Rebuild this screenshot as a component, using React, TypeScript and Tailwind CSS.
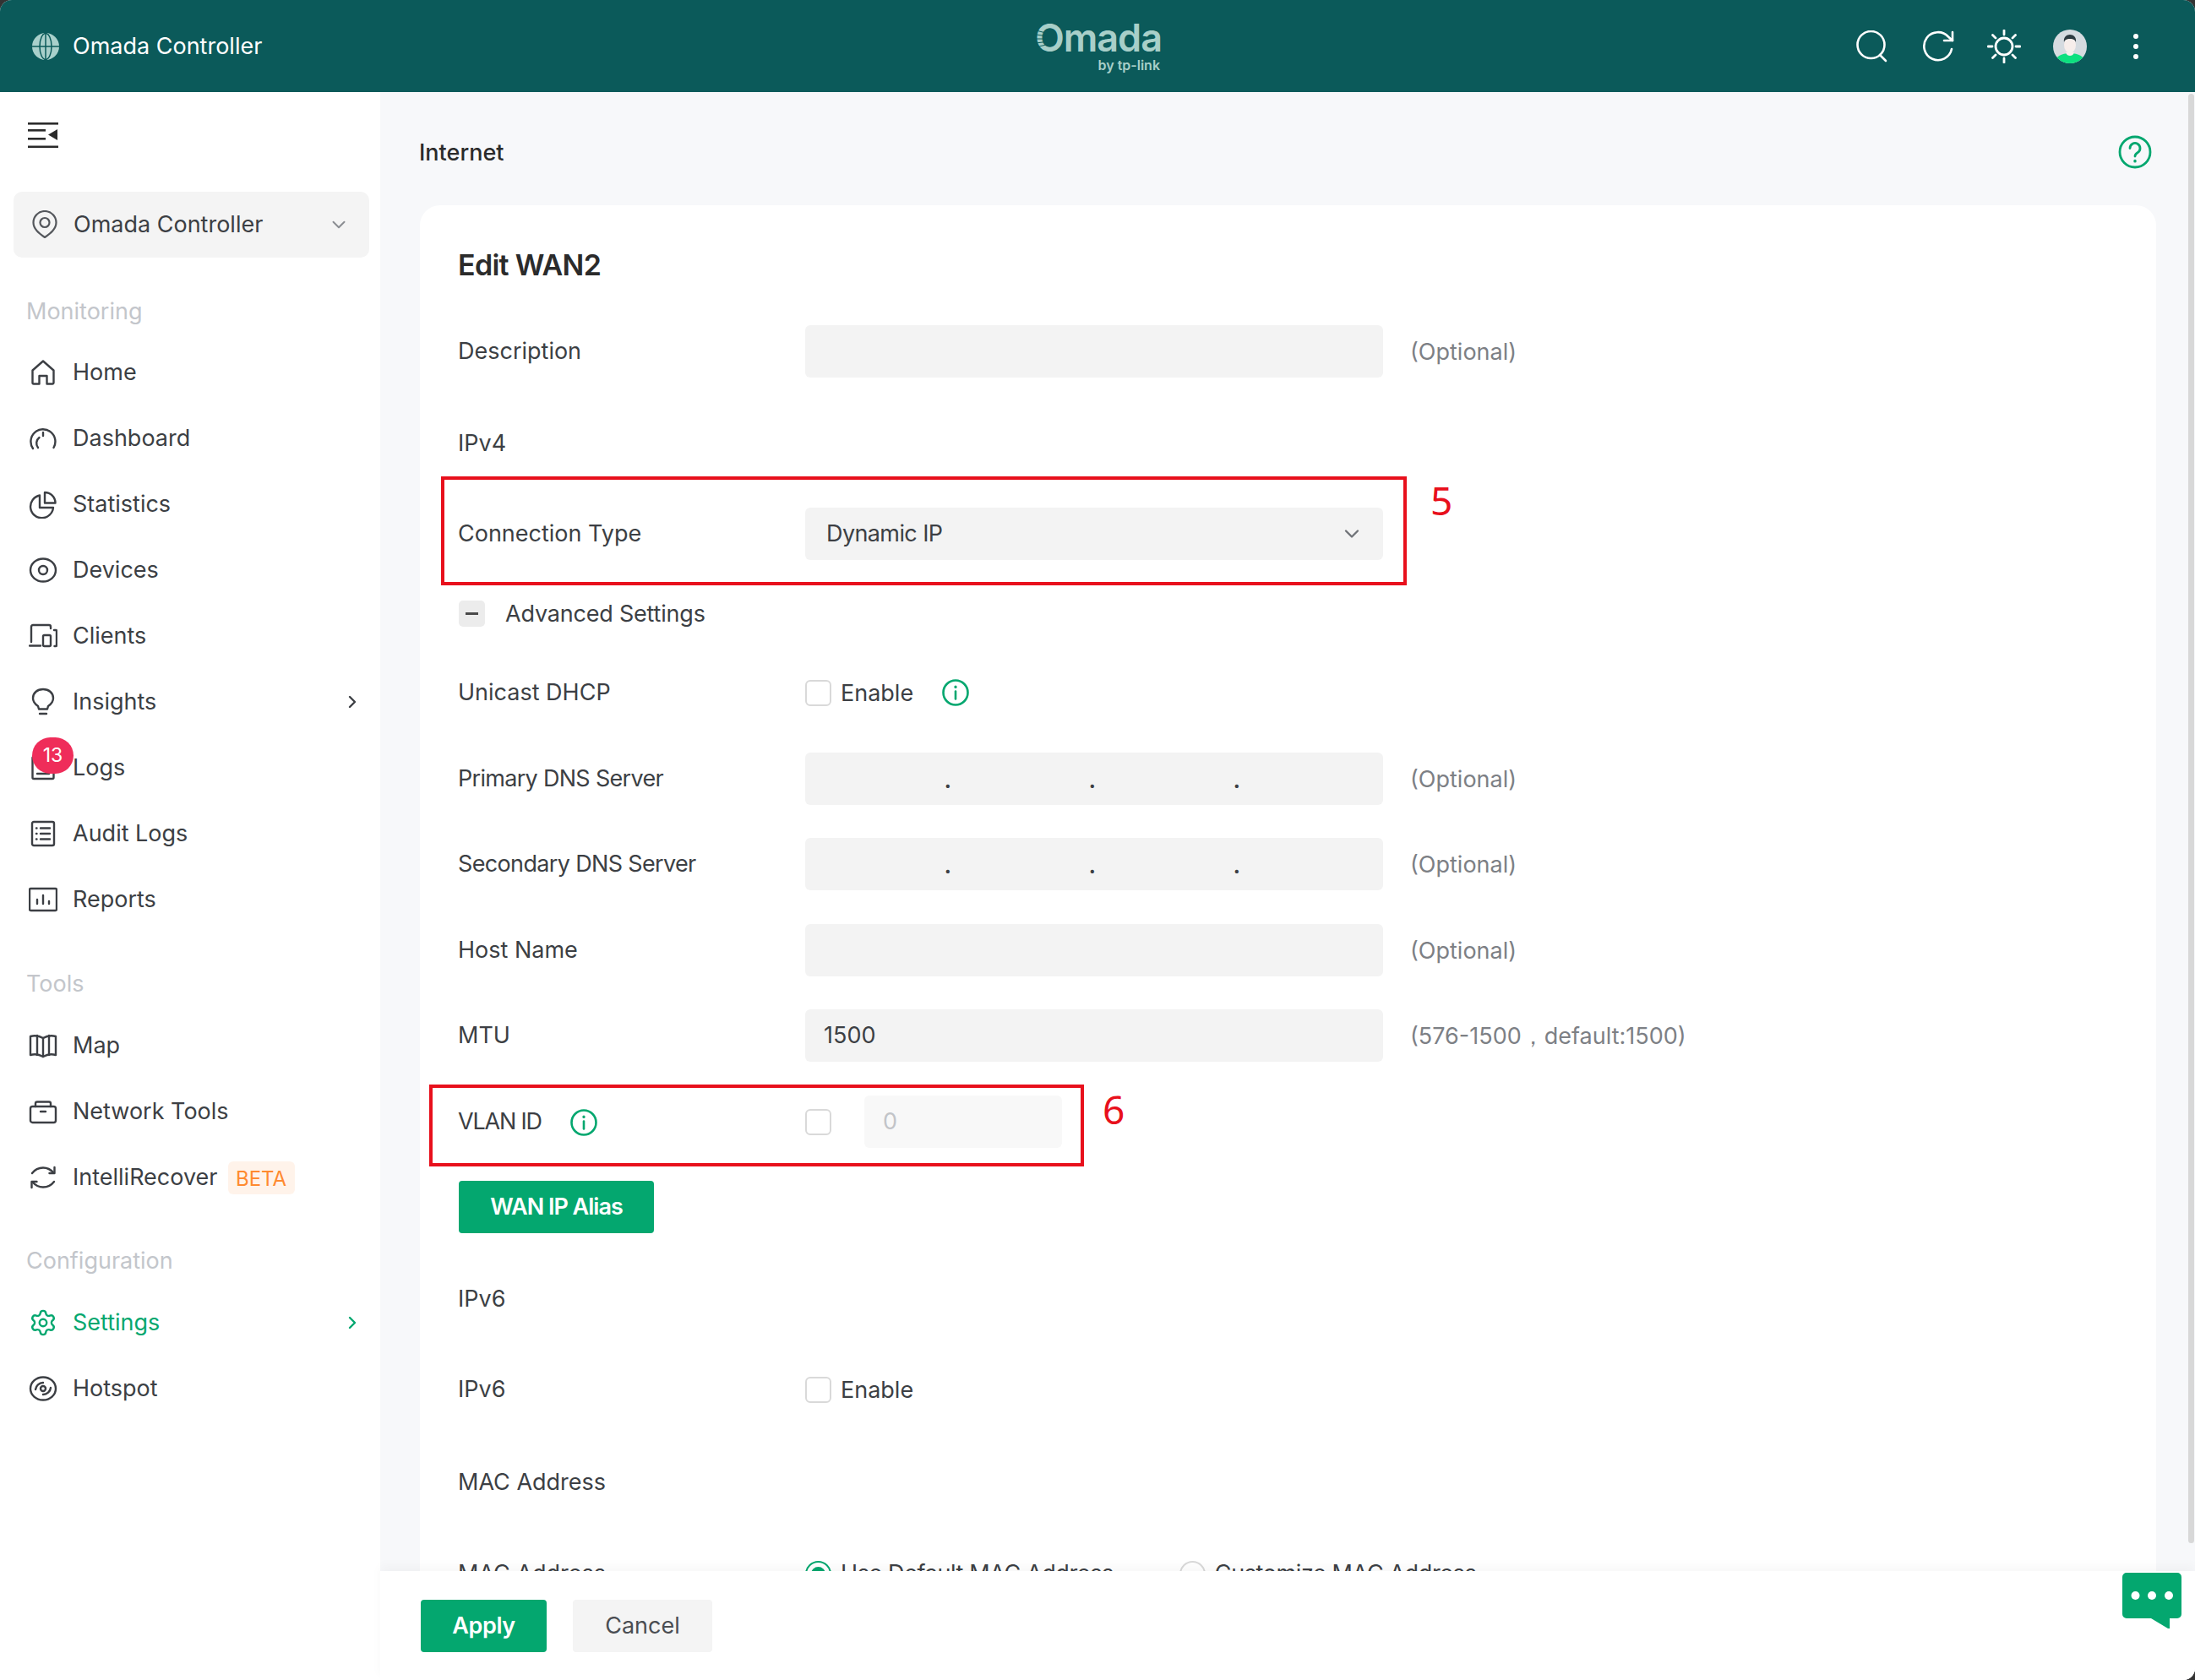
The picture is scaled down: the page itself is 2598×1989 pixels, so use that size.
import React from 'react';
import { Settings, ChevronDown, ChevronRight } from 'lucide-react';

type IconProps = { className?: string };

const Ico: React.FC<React.PropsWithChildren<IconProps>> = ({ children, className }) => (
  <svg viewBox="0 0 34 34" fill="none" stroke="currentColor" strokeWidth="2.4" strokeLinecap="round" strokeLinejoin="round" className={className ?? 'w-[34px] h-[34px] shrink-0'}>
    {children}
  </svg>
);

const icons: Record<string, React.ReactNode> = {
  Home: <path d="M4.5 14.5 17 3.5l12.5 11V29a1.5 1.5 0 0 1-1.5 1.5h-6.500V21h-9v9.500H6A1.500 1.500 0 0 1 4.500 29Z" />,
  Dashboard: (
    <>
      <path d="M5 29A14.500 14.500 0 1 1 29.500 28" />
      <path d="M11 28a8.500 8.500 0 0 1 1.500-12" />
      <path d="M17 10v4" />
    </>
  ),
  Statistics: (
    <>
      <path d="M13 6.500A13.500 13.500 0 1 0 29 21H13Z" />
      <path d="M19 3a12.500 12.500 0 0 1 12.500 12.500H19Z" />
    </>
  ),
  Devices: (
    <>
      <ellipse cx="17" cy="17" rx="15" ry="13.500" />
      <circle cx="17" cy="17" r="5" />
    </>
  ),
  Clients: (
    <>
      <path d="M3 24V6A2 2 0 0 1 5 4h19a2 2 0 0 1 2 2v2" />
      <path d="M1 28.500h13" />
      <rect x="17" y="16" width="9" height="13" rx="1.500" />
      <path d="M30 10h2a1 1 0 0 1 1 1v17a1 1 0 0 1-1 1h-1.500" />
    </>
  ),
  Insights: (
    <>
      <path d="M17 2c-7 0-12 4.500-12 10.500 0 4.500 3 7.500 6 9.500l1 3.500h10l1-3.500c3-2 6-5 6-9.500C29 6.500 24 2 17 2Z" />
      <path d="M13 31h8" />
    </>
  ),
  Logs: (
    <>
      <rect x="4.500" y="4" width="25" height="26" rx="1.500" />
      <path d="M10 24h14" />
    </>
  ),
  'Audit Logs': (
    <>
      <rect x="4" y="3" width="26" height="28" rx="2" />
      <path d="M14 10.500h11M14 17h11M14 23.500h11M9 10.500h.5M9 17h.5M9 23.500h.5" />
    </>
  ),
  Reports: (
    <>
      <rect x="1" y="4" width="32" height="26" rx="1.500" />
      <path d="M10 22v-5M17 22V12M24 22v-3" />
    </>
  ),
  Map: (
    <>
      <path d="M2 6c5-1.500 10-1 15 2 5-3 10-3.500 15-2v22c-5-1.500-10-1-15 2-5-3-10-3.500-15-2Z" />
      <path d="M10 5v23M17 8v22M24 5v23" />
    </>
  ),
  'Network Tools': (
    <>
      <rect x="2" y="11" width="30" height="19" rx="2.500" />
      <path d="M8 11V7.500A2 2 0 0 1 10 5.500h14a2 2 0 0 1 2 2V11" />
      <path d="M14 17h6" />
    </>
  ),
  IntelliRecover: (
    <>
      <path d="M4 12c3-4 8-6.500 13-6.500s9 2 12.500 6" />
      <path d="M30.500 5v7h-6" />
      <path d="M30 22c-3 4-8 6.500-13 6.500s-9-2-12.500-6" />
      <path d="M3.500 29v-7h6" />
    </>
  ),
  Hotspot: (
    <>
      <ellipse cx="17" cy="17" rx="15" ry="13.500" />
      <path d="M8 18a9 9 0 0 1 9-8M26 16a9 9 0 0 1-9 8" />
      <circle cx="17" cy="17" r="3" />
    </>
  ),
};

const NavItem: React.FC<{ label: string; arrow?: boolean; active?: boolean; children?: React.ReactNode }> = ({ label, arrow, active, children }) => (
  <div className={`relative flex h-[78px] items-center gap-[18px] pl-[34px] pr-[21px] text-[27px] ${active ? 'text-[#04a76f]' : 'text-[#3c3f44]'}`}>
    {label === 'Settings' ? <Settings className="h-[34px] w-[34px] shrink-0" strokeWidth={1.7} /> : <Ico>{icons[label]}</Ico>}
    <span className="pt-[1px]">{label}</span>
    {children}
    {arrow && <ChevronRight className="ml-auto h-[24px] w-[24px]" strokeWidth={2.4} />}
  </div>
);

const SectionLabel: React.FC<{ label: string; className: string }> = ({ label, className }) => (
  <div className={`pl-[31px] text-[27px] leading-[40px] text-[#c3c6cb] ${className}`}>{label}</div>
);

const Field: React.FC<{ className?: string; children?: React.ReactNode }> = ({ className, children }) => (
  <div className={`h-[62px] w-[684px] rounded-[6px] bg-[#f3f3f3] ${className ?? ''}`}>{children}</div>
);

const Row: React.FC<{ label: React.ReactNode; className: string; children?: React.ReactNode; h?: string }> = ({ label, className, children, h }) => (
  <div className={`flex items-center ${h ?? 'h-[62px]'} ${className}`}>
    <div className="flex w-[411px] shrink-0 items-center gap-[33px] pt-[1px] text-[#3c3f44]">{label}</div>
    {children}
  </div>
);

const Optional: React.FC<{ text?: string }> = ({ text }) => (
  <span className="ml-[32px] pt-[2px] text-[#7d8085]">{text ?? '(Optional)'}</span>
);

const IpField = () => (
  <Field className="grid grid-cols-4 text-[#3c3f44]">
    {[0, 1, 2].map(i => (
      <div key={i} className="mr-[-2px] flex items-end justify-end pb-[14px] font-semibold leading-[30px]">.</div>
    ))}
  </Field>
);

const Check = () => <div className="h-[31px] w-[31px] shrink-0 rounded-[6px] border-2 border-[#d9d9d9] bg-white" />;

const InfoIcon = () => (
  <svg viewBox="0 0 34 34" fill="none" className="h-[34px] w-[34px] shrink-0 text-[#04a76f]" stroke="currentColor" strokeWidth="2.6" strokeLinecap="round">
    <circle cx="17" cy="17" r="14.500" />
    <path d="M17 15.500v9" />
    <path d="M17 10v.4" strokeWidth="3.200" />
  </svg>
);

const Radio: React.FC<{ on?: boolean }> = ({ on }) => (
  <div className={`flex h-[31px] w-[31px] shrink-0 items-center justify-center rounded-full border-2 ${on ? 'border-[#04a76f]' : 'border-[#d9d9d9]'}`}>
    {on && <div className="h-[17px] w-[17px] rounded-full bg-[#04a76f]" />}
  </div>
);

export default function App() {
  return (
    <div className="h-[1989px] w-[2598px] overflow-hidden bg-[#333333] font-['Inter','Noto_Sans',sans-serif] text-[27px]">
      <div className="relative flex h-full flex-col overflow-hidden rounded-t-[14px] rounded-br-[14px] bg-white">
        <header className="relative flex h-[109px] shrink-0 items-center bg-[#0b5a5a] text-white">
          <svg viewBox="0 0 32 32" className="ml-[38px] h-[32px] w-[32px] text-[#a9d0cb]" fill="currentColor">
            <circle cx="16" cy="16" r="16" />
            <path d="M0 16h32M16 0v32" stroke="#0b5a5a" strokeWidth="1.500" />
            <ellipse cx="16" cy="16" rx="7" ry="15.500" fill="none" stroke="#0b5a5a" strokeWidth="1.500" />
          </svg>
          <span className="ml-[16px] pt-[2px] text-[27px]">Omada Controller</span>
          <div className="absolute left-[1225px] top-[22px] flex w-[150px] flex-col items-end text-[#a8cfc9]">
            <span className="relative text-[45px] font-semibold leading-[46px] tracking-[-1px]">
              Omada
              <svg viewBox="0 0 12 26" className="absolute left-[1px] top-[11px] h-[26px] w-[12px]" stroke="#0b5a5a" strokeWidth="1">
                <path d="M0 3l12 3M0 8l12 1.500M0 13h12M0 18l12-1.500M0 23l12-3" />
              </svg>
            </span>
            <span className="mr-[2px] text-[16px] font-semibold leading-[18px]">by tp-link</span>
          </div>
          <div className="ml-auto flex items-center pr-[31px]">
            <div className="flex w-[78px] justify-center">
              <svg viewBox="0 0 38 38" fill="none" stroke="white" strokeWidth="2.600" strokeLinecap="round" className="h-[38px] w-[38px]">
                <circle cx="17.500" cy="17" r="16" />
                <path d="m28 29 7 7" />
              </svg>
            </div>
            <div className="flex w-[78px] justify-center">
              <svg viewBox="0 0 38 38" fill="none" stroke="white" strokeWidth="2.600" strokeLinecap="round" strokeLinejoin="round" className="h-[38px] w-[38px]">
                <path d="M35 22A16.500 16.500 0 1 1 31 7.500L36 12" />
                <path d="M36 2v10H26" />
              </svg>
            </div>
            <div className="flex w-[78px] justify-center">
              <svg viewBox="0 0 40 40" fill="none" stroke="white" strokeWidth="2.800" strokeLinecap="round" className="h-[40px] w-[40px]">
                <circle cx="20" cy="20" r="10" />
                <path d="M20 1v5M20 34v5M1 20h5M34 20h5M6.500 6.500l3.500 3.500M30 30l3.500 3.500M6.500 33.500 10 30M30 10l3.500-3.500" />
              </svg>
            </div>
            <div className="flex w-[78px] justify-center">
              <svg viewBox="0 0 40 40" className="h-[40px] w-[40px]">
                <clipPath id="av"><circle cx="20" cy="20" r="20" /></clipPath>
                <g clipPath="url(#av)">
                  <rect width="40" height="40" fill="#d5dbe0" />
                  <path d="M2 40c0-8 8-12 18-12s18 4 18 12Z" fill="#0ce07f" />
                  <ellipse cx="20" cy="18" rx="7" ry="10" fill="#f7eeeb" />
                  <path d="M20 27h-5c1 3 3 4 5 4s4-1 5-4Z" fill="#f7eeeb" />
                  <path d="M13 15c-1-6 3-9 7-9s8 3 7 9c-1-3-3-4-7-4s-6 1-7 4Z" fill="#2c3a40" />
                </g>
              </svg>
            </div>
            <div className="flex w-[78px] flex-col items-center gap-[6px]">
              <div className="h-[6px] w-[6px] rounded-full bg-white" />
              <div className="h-[6px] w-[6px] rounded-full bg-white" />
              <div className="h-[6px] w-[6px] rounded-full bg-white" />
            </div>
          </div>
        </header>

        <div className="flex min-h-0 flex-1">
          <aside className="w-[450px] shrink-0 bg-white">
            <div className="flex h-[102px] items-center pl-[33px]">
              <svg viewBox="0 0 36 32" className="h-[32px] w-[36px]" fill="#2b2b2b">
                <rect y="1" width="36" height="2.600" />
                <rect y="9" width="21" height="2.600" />
                <rect y="19" width="21" height="2.600" />
                <rect y="28.500" width="36" height="2.600" />
                <path d="M35 9v13l-11-6.500Z" />
              </svg>
            </div>
            <div className="ml-[16px] mr-[13px] mt-[16px] flex h-[78px] items-center gap-[19px] rounded-[10px] bg-[#f4f4f4] pl-[22px] pr-[23px] text-[#3c3f44]">
              <svg viewBox="0 0 30 34" fill="none" stroke="currentColor" strokeWidth="2.200" strokeLinejoin="round" className="h-[34px] w-[30px] text-[#54575c]">
                <path d="M15 32C8 27 1.500 22 1.500 14.500a13.500 13.500 0 0 1 27 0C28.500 22 22 27 15 32Z" />
                <circle cx="15" cy="14.500" r="5.500" />
              </svg>
              <span>Omada Controller</span>
              <ChevronDown className="ml-auto h-[26px] w-[26px] text-[#8a8d92]" strokeWidth={1.800} />
            </div>
            <SectionLabel label="Monitoring" className="mt-[44px]" />
            <div className="mt-[13px]">
              <NavItem label="Home" />
              <NavItem label="Dashboard" />
              <NavItem label="Statistics" />
              <NavItem label="Devices" />
              <NavItem label="Clients" />
              <NavItem label="Insights" arrow />
              <NavItem label="Logs">
                <div className="absolute left-[38px] top-[3px] flex h-[43px] w-[49px] items-center justify-center rounded-full bg-[#ef2d5a] text-[23px] text-white">13</div>
              </NavItem>
              <NavItem label="Audit Logs" />
              <NavItem label="Reports" />
            </div>
            <SectionLabel label="Tools" className="mt-[41px]" />
            <div className="mt-[14px]">
              <NavItem label="Map" />
              <NavItem label="Network Tools" />
              <NavItem label="IntelliRecover">
                <span className="ml-[-6px] flex h-[39px] w-[79px] items-center justify-center rounded-[6px] bg-[#fff3ea] pt-[3px] text-[24px] text-[#ff8a30]">BETA</span>
              </NavItem>
            </div>
            <SectionLabel label="Configuration" className="mt-[40px]" />
            <div className="mt-[14px]">
              <NavItem label="Settings" arrow active />
              <NavItem label="Hotspot" />
            </div>
          </aside>

          <main className="relative flex min-w-0 flex-1 flex-col bg-[#f7f8fa]">
            <div className="relative min-h-0 flex-1 overflow-hidden pl-[47px] pr-[46px]">
              <div className="flex h-[134px] items-center justify-between pt-[8px]">
                <span className="ml-[-1px] pt-[2px] font-medium text-[#2b2b2b]">Internet</span>
                <svg viewBox="0 0 40 40" fill="none" stroke="#04a76f" strokeWidth="2.800" strokeLinecap="round" className="mr-[5px] h-[40px] w-[40px]">
                  <circle cx="20" cy="20" r="18" />
                  <path d="M14 15.500a6 6 0 1 1 9 5.200c-2 1.200-3 2.300-3 4.300" />
                  <path d="M20 30.500v.4" strokeWidth="3.400" />
                </svg>
              </div>
              <div className="relative min-h-[1700px] rounded-t-[24px] bg-white pl-[45px] pt-[36px]">
                <h2 className="flex h-[70px] items-center pb-[2px] text-[34px] font-semibold tracking-[-0.7px] text-[#2b2b2b]">Edit WAN2</h2>

                <Row label="Description" className="mt-[36px]">
                  <Field />
                  <Optional />
                </Row>
                <Row label="IPv4" h="h-[40px]" className="mt-[58px]" />
                <Row label="Connection Type" className="mt-[56px]">
                  <Field className="flex items-center justify-between pl-[25px] pr-[23px] text-[#3c3f44]">
                    <span className="tracking-[-0.6px]">Dynamic IP</span>
                    <ChevronDown className="h-[28px] w-[28px] text-[#6f7277]" strokeWidth={2} />
                  </Field>
                </Row>
                <div className="ml-[1px] mt-[48px] flex h-[31px] items-center gap-[24px] text-[#3c3f44]">
                  <div className="flex h-[31px] w-[31px] items-center justify-center rounded-[5px] bg-[#ececec]">
                    <div className="h-[3px] w-[15px] bg-[#4a4a4a]" />
                  </div>
                  <span className="pt-[2px] tracking-[-0.2px]">Advanced Settings</span>
                </div>
                <Row label="Unicast DHCP" className="mt-[47px]">
                  <Check />
                  <span className="ml-[11px] pt-[2px] text-[#3c3f44]">Enable</span>
                  <span className="ml-[33px]"><InfoIcon /></span>
                </Row>
                <Row label={<span className="tracking-[-0.7px]">Primary DNS Server</span>} className="mt-[40px]">
                  <IpField />
                  <Optional />
                </Row>
                <Row label={<span className="tracking-[-0.65px]">Secondary DNS Server</span>} className="mt-[39px]">
                  <IpField />
                  <Optional />
                </Row>
                <Row label="Host Name" className="mt-[40px]">
                  <Field />
                  <Optional />
                </Row>
                <Row label="MTU" className="mt-[39px]">
                  <Field className="flex items-center pl-[22px] text-[#3c3f44]">1500</Field>
                  <Optional text="(576-1500，default:1500)" />
                </Row>
                <Row label={<><span className="tracking-[-1.2px]">VLAN ID</span><InfoIcon /></>} className="mt-[40px]">
                  <Check />
                  <div className="ml-[39px] flex h-[62px] w-[234px] items-center rounded-[6px] bg-[#f8f8f8] pl-[22px] text-[#c2c4c8]">0</div>
                </Row>
                <button className="ml-[1px] mt-[39px] flex h-[62px] w-[231px] items-center justify-center rounded-[4px] bg-[#04a76f] pt-[1px] font-semibold tracking-[-1px] text-white">WAN IP Alias</button>
                <Row label="IPv6" h="h-[40px]" className="mt-[58px]" />
                <Row label="IPv6" h="h-[40px]" className="mt-[67px]">
                  <Check />
                  <span className="ml-[11px] pt-[2px] text-[#3c3f44]">Enable</span>
                </Row>
                <Row label="MAC Address" h="h-[40px]" className="mt-[70px]" />
                <Row label="MAC Address" h="h-[40px]" className="mt-[68px]">
                  <Radio on />
                  <span className="ml-[11px] tracking-[-0.4px] text-[#3c3f44]">Use Default MAC Address</span>
                  <span className="ml-[78px]"><Radio /></span>
                  <span className="ml-[11px] tracking-[-0.4px] text-[#3c3f44]">Customize MAC Address</span>
                </Row>

                <div className="absolute left-[25px] top-[321px] h-[129px] w-[1143px] border-[4px] border-[#e8101c]" />
                <span className="absolute left-[1196px] top-[319px] font-['Noto_Sans',sans-serif] text-[46px] leading-[60px] text-[#e8101c]">5</span>
                <div className="absolute left-[11px] top-[1041px] h-[97px] w-[775px] border-[4px] border-[#e8101c]" />
                <span className="absolute left-[808px] top-[1040px] font-['Noto_Sans',sans-serif] text-[46px] leading-[60px] text-[#e8101c]">6</span>
              </div>
            </div>

            <footer className="z-10 flex h-[129px] shrink-0 items-center gap-[31px] bg-white pl-[48px] shadow-[0_-6px_12px_rgba(0,0,0,0.03)]">
              <button className="h-[62px] w-[149px] rounded-[4px] bg-[#04a76f] pt-[2px] font-semibold tracking-[-0.4px] text-white">Apply</button>
              <button className="h-[62px] w-[165px] rounded-[4px] bg-[#f4f4f4] pt-[2px] text-[#4a4d52]">Cancel</button>
            </footer>

            <div className="absolute right-[1px] top-[2px] h-[1716px] w-[7px] rounded-full bg-[#d8d8d8]" />
            <svg viewBox="0 0 70 66" className="absolute bottom-[61px] right-[16px] z-20 h-[66px] w-[70px]">
              <path d="M5 0h60a5 5 0 0 1 5 5v44a5 5 0 0 1-5 5H56v11a1 1 0 0 1-2 1L34 54H5a5 5 0 0 1-5-5V5a5 5 0 0 1 5-5Z" fill="#04a76f" />
              <circle cx="15.500" cy="27" r="5" fill="#fff" />
              <circle cx="35" cy="27" r="5" fill="#fff" />
              <circle cx="55" cy="27" r="5" fill="#fff" />
            </svg>
          </main>
        </div>
      </div>
    </div>
  );
}
